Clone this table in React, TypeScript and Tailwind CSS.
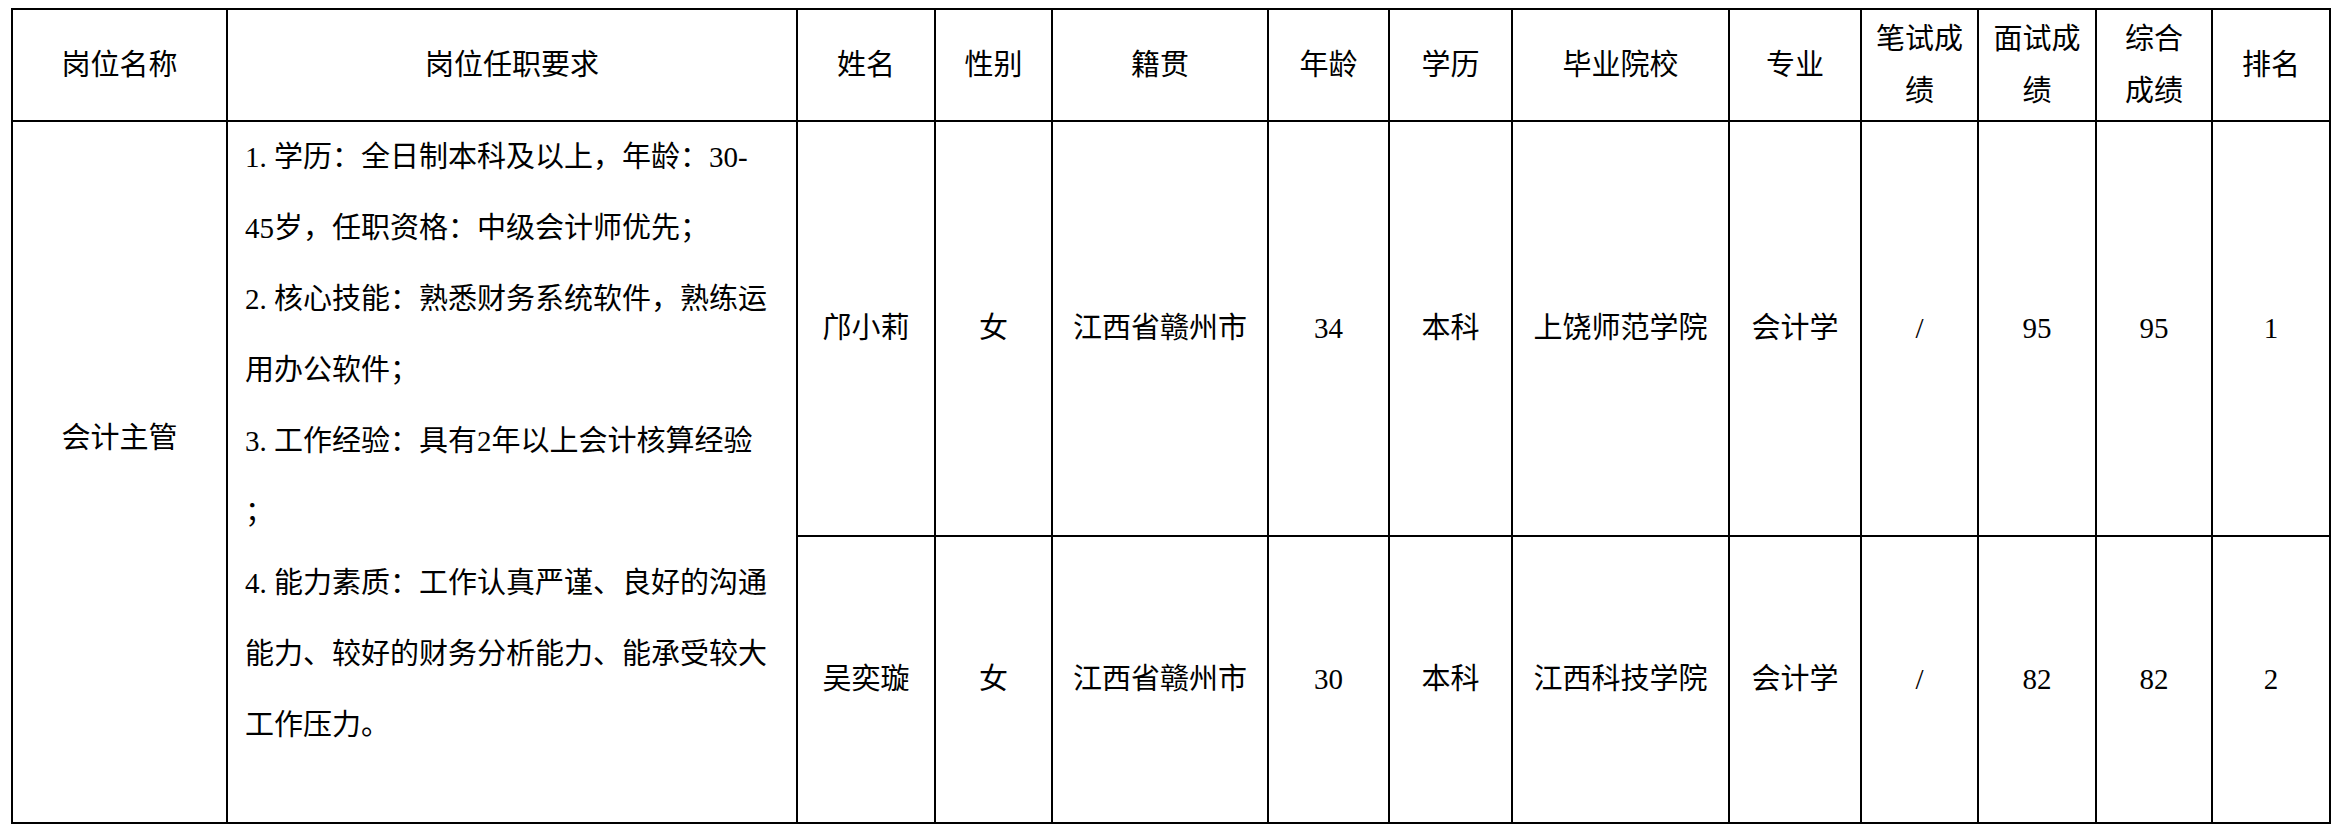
import { Fragment } from "react";

const HEADERS: string[][] = [
  ["岗位名称"],
  ["岗位任职要求"],
  ["姓名"],
  ["性别"],
  ["籍贯"],
  ["年龄"],
  ["学历"],
  ["毕业院校"],
  ["专业"],
  ["笔试成", "绩"],
  ["面试成", "绩"],
  ["综合", "成绩"],
  ["排名"],
];

// requirement text, wrapped the same way as the source sheet
const REQUIREMENTS = [
  "1.学历：全日制本科及以上，年龄：30-",
  "45岁，任职资格：中级会计师优先；",
  "2.核心技能：熟悉财务系统软件，熟练运",
  "用办公软件；",
  "3.工作经验：具有2年以上会计核算经验",
  "；",
  "4.能力素质：工作认真严谨、良好的沟通",
  "能力、较好的财务分析能力、能承受较大",
  "工作压力。",
];

interface Candidate {
  name: string;
  sex: string;
  origin: string;
  age: string;
  edu: string;
  school: string;
  major: string;
  written: string;
  interview: string;
  total: string;
  rank: string;
}

const CANDIDATES: Candidate[] = [
  {
    name: "邝小莉",
    sex: "女",
    origin: "江西省赣州市",
    age: "34",
    edu: "本科",
    school: "上饶师范学院",
    major: "会计学",
    written: "/",
    interview: "95",
    total: "95",
    rank: "1",
  },
  {
    name: "吴奕璇",
    sex: "女",
    origin: "江西省赣州市",
    age: "30",
    edu: "本科",
    school: "江西科技学院",
    major: "会计学",
    written: "/",
    interview: "82",
    total: "82",
    rank: "2",
  },
];

function Cell({ children }: { children: React.ReactNode }) {
  return (
    <div className="flex items-center justify-center bg-white whitespace-nowrap">
      {children}
    </div>
  );
}

function ReqLine({ text }: { text: string }) {
  // "1." style numbering takes a full-width slot in the source font
  const m = text.match(/^(\d\.)(.*)$/);
  if (!m) return <div className="whitespace-nowrap">{text}</div>;
  return (
    <div className="whitespace-nowrap">
      <span className="inline-block w-[29px]">{m[1]}</span>
      {m[2]}
    </div>
  );
}

export default function App() {
  return (
    <div className="min-h-screen bg-white pl-[11px] pt-[8px] text-black font-[family-name:'Liberation_Serif','Noto_Sans_CJK_SC',serif] text-[29px]">
      <div className="inline-grid grid-cols-[213px_568px_136px_115px_214px_119px_121px_215px_130px_115px_116px_114px_116px] grid-rows-[110px_413px_285px] gap-[2px] bg-black p-[2px]">
        {/* Header */}
        {HEADERS.map((lines, i) => (
          <div
            key={i}
            className="flex flex-col items-center justify-center bg-white leading-[52px] whitespace-nowrap"
          >
            {lines.map((l) => (
              <span key={l}>{l}</span>
            ))}
          </div>
        ))}

        {/* Position title, spans both candidates */}
        <div className="row-span-2 flex items-center justify-center bg-white pb-[66px]">
          会计主管
        </div>

        {/* Requirements */}
        <div className="row-span-2 bg-white pl-[17px] leading-[71px]">
          {REQUIREMENTS.map((line, i) => (
            <ReqLine key={i} text={line} />
          ))}
        </div>

        {CANDIDATES.map((c) => (
          <Fragment key={c.name}>
            <Cell>{c.name}</Cell>
            <Cell>{c.sex}</Cell>
            <Cell>{c.origin}</Cell>
            <Cell>{c.age}</Cell>
            <Cell>{c.edu}</Cell>
            <Cell>{c.school}</Cell>
            <Cell>{c.major}</Cell>
            <Cell>{c.written}</Cell>
            <Cell>{c.interview}</Cell>
            <Cell>{c.total}</Cell>
            <Cell>{c.rank}</Cell>
          </Fragment>
        ))}
      </div>
    </div>
  );
}
